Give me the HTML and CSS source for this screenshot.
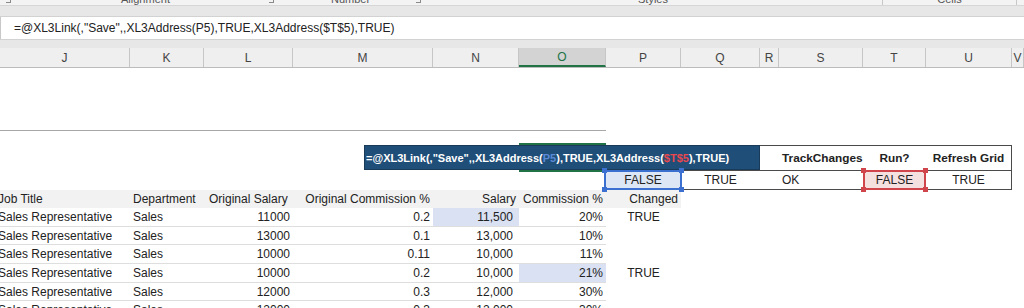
FILE: index.html
```html
<!DOCTYPE html>
<html lang="en">
  <head>
    <meta charset="UTF-8" />
    <title>XL3Link - Save</title>
    <link rel="stylesheet" href="styles.css">
  </head>
  <body>
    <div class="ribbon">
      <div class="group g-font"><span class="launch"></span></div>
      <div class="group g-align"><span class="label">Alignment</span><span class="launch"></span></div>
      <div class="group g-number"><span class="label">Number</span><span class="launch"></span></div>
      <div class="group g-styles"><span class="label">Styles</span></div>
      <div class="group g-cells"><span class="label">Cells</span></div>
    </div>
    <div class="band"></div>
    <div class="formula-bar">=@XL3Link(,"Save",,XL3Address(P5),TRUE,XL3Address($T$5),TRUE)</div>
    <div class="band band-low"></div>

    <div class="col-heads">
      <div class="ch w-j">J</div>
      <div class="ch w-k">K</div>
      <div class="ch w-l">L</div>
      <div class="ch w-m">M</div>
      <div class="ch w-n">N</div>
      <div class="ch w-o active">O</div>
      <div class="ch w-p">P</div>
      <div class="ch w-q">Q</div>
      <div class="ch w-r">R</div>
      <div class="ch w-s">S</div>
      <div class="ch w-t">T</div>
      <div class="ch w-u">U</div>
      <div class="ch w-v">V</div>
    </div>

    <div class="sheet">
      <div class="row r-blank">
        <div class="rule"></div>
      </div>
      <div class="row r-gap"></div>

      <div class="row r-box">
        <div class="c-o active-cell"></div>
        <div class="xl-box">=@XL3Link(,"Save",,XL3Address(<span class="ref-p">P5</span>),TRUE,XL3Address(<span class="ref-t">$T$5</span>),TRUE)</div>
        <div class="c-r tb"></div>
        <div class="c-s tb bold left">TrackChanges</div>
        <div class="c-t tb bold center">Run?</div>
        <div class="c-u tb tb-end bold center">Refresh Grid</div>
      </div>

      <div class="row r-vals">
        <div class="c-p sel sel-blue center">FALSE<i class="h tl"></i><i class="h tr"></i><i class="h bl"></i><i class="h br"></i></div>
        <div class="c-q tb2 center">TRUE</div>
        <div class="c-r tb2"></div>
        <div class="c-s tb2 left">OK</div>
        <div class="c-t sel sel-red center">FALSE<i class="h tl"></i><i class="h tr"></i><i class="h bl"></i><i class="h br"></i></div>
        <div class="c-u tb2 tb-end center">TRUE</div>
      </div>

      <div class="row r-head">
        <div class="c-j left">Job Title</div>
        <div class="c-k left">Department</div>
        <div class="c-l left pad-l">Original Salary</div>
        <div class="c-m right">Original Commission %</div>
        <div class="c-n right">Salary</div>
        <div class="c-o right">Commission %</div>
        <div class="c-p right">Changed</div>
      </div>

      <div class="row r-data">
        <div class="c-j left">Sales Representative</div>
        <div class="c-k left">Sales</div>
        <div class="c-l right">11000</div>
        <div class="c-m right">0.2</div>
        <div class="c-n right acct hl">11,500</div>
        <div class="c-o right">20%</div>
        <div class="c-p center">TRUE</div>
      </div>
      <div class="row r-data">
        <div class="c-j left">Sales Representative</div>
        <div class="c-k left">Sales</div>
        <div class="c-l right">13000</div>
        <div class="c-m right">0.1</div>
        <div class="c-n right acct">13,000</div>
        <div class="c-o right">10%</div>
      </div>
      <div class="row r-data">
        <div class="c-j left">Sales Representative</div>
        <div class="c-k left">Sales</div>
        <div class="c-l right">10000</div>
        <div class="c-m right">0.11</div>
        <div class="c-n right acct">10,000</div>
        <div class="c-o right">11%</div>
      </div>
      <div class="row r-data">
        <div class="c-j left">Sales Representative</div>
        <div class="c-k left">Sales</div>
        <div class="c-l right">10000</div>
        <div class="c-m right">0.2</div>
        <div class="c-n right acct">10,000</div>
        <div class="c-o right hl">21%</div>
        <div class="c-p center">TRUE</div>
      </div>
      <div class="row r-data">
        <div class="c-j left">Sales Representative</div>
        <div class="c-k left">Sales</div>
        <div class="c-l right">12000</div>
        <div class="c-m right">0.3</div>
        <div class="c-n right acct">12,000</div>
        <div class="c-o right">30%</div>
      </div>
      <div class="row r-data">
        <div class="c-j left">Sales Representative</div>
        <div class="c-k left">Sales</div>
        <div class="c-l right">12000</div>
        <div class="c-m right">0.3</div>
        <div class="c-n right acct">12,000</div>
        <div class="c-o right">30%</div>
      </div>
    </div>
  </body>
</html>
```

FILE: styles.css
```css
body {
  margin: 0;
  width: 1024px;
  height: 308px;
  overflow: hidden;
  background: #fff;
  color: #222;
  font-family: 'Liberation Sans', Arial, sans-serif;
}

/* ribbon group labels, cut off at the top edge */
.ribbon {
  display: flex;
  height: 5px;
  overflow: hidden;
  background: #f3f3f3;
  border-bottom: 1px solid #d6d6d6;
}
.group {
  position: relative;
  display: flex;
  justify-content: center;
  flex: none;
}
.group .label {
  font-size: 11px;
  line-height: 11px;
  margin-top: -6px;
  color: #555;
}
.g-font { width: 14px; }
.g-align { width: 263px; }
.g-number { width: 147px; }
.g-styles { width: 458px; border-right: 1px solid #c8c8c8; }
.g-cells { width: 133px; border-right: 1px solid #c8c8c8; }
.launch {
  position: absolute;
  right: 3px;
  top: -3px;
  width: 4px;
  height: 5px;
  border-right: 1px solid #8a8a8a;
  border-bottom: 1px solid #8a8a8a;
}

.band {
  height: 10px;
  background: #e7e7e7;
  border-bottom: 1px solid #d2d2d2;
}
.band-low {
  height: 8px;
  border-top: 1px solid #d2d2d2;
  border-bottom: none;
}
.formula-bar {
  height: 22px;
  line-height: 22px;
  padding-left: 13px;
  background: #fff;
  border-left: 1px solid #c8c8c8;
  font-size: 12px;
  color: #222;
  white-space: nowrap;
}

/* column letters */
.col-heads {
  display: flex;
  height: 20px;
  background: #efefef;
  border-bottom: 1px solid #bcbcbc;
  box-sizing: border-box;
}
.ch {
  flex: none;
  box-sizing: border-box;
  border-right: 1px solid #c6c6c6;
  text-align: center;
  font-size: 12px;
  line-height: 20px;
  color: #444;
}
.ch.active {
  background: #d3d3d3;
  color: #217346;
  border-bottom: 2px solid #217346;
  line-height: 18px;
}
.w-j { width: 130px; }
.w-k { width: 74px; }
.w-l { width: 89px; }
.w-m { width: 140px; }
.w-n { width: 86px; }
.w-o { width: 87px; }
.w-p { width: 75px; }
.w-q { width: 79px; }
.w-r { width: 19px; }
.w-s { width: 84px; }
.w-t { width: 63px; }
.w-u { width: 86px; }
.w-v { width: 12px; }

/* cell grid */
.row {
  display: grid;
  grid-template-columns: 130px 74px 89px 140px 86px 87px 75px 79px 19px 84px 63px 86px 12px;
  font-size: 12px;
}
.row > * {
  grid-row: 1;
  box-sizing: border-box;
  white-space: nowrap;
  display: flex;
  align-items: center;
}
.c-j { grid-column: 1; }
.c-k { grid-column: 2; }
.c-l { grid-column: 3; }
.c-m { grid-column: 4; }
.c-n { grid-column: 5; }
.c-o { grid-column: 6; }
.c-p { grid-column: 7; }
.c-q { grid-column: 8; }
.c-r { grid-column: 9; }
.c-s { grid-column: 10; }
.c-t { grid-column: 11; }
.c-u { grid-column: 12; }

.left { justify-content: flex-start; padding-left: 3px; }
.right { justify-content: flex-end; padding-right: 3px; }
.center { justify-content: center; }
.bold { font-weight: bold; font-size: 11.8px; }
.c-j.left { padding-left: 0; margin-left: -2px; }
.pad-l { padding-left: 5px; }
.acct { padding-right: 6px; }

.r-blank { height: 63px; }
.rule {
  grid-column: 1 / 7;
  border-bottom: 1px solid #a8a8a8;
}
.r-gap { height: 14px; }

.r-box { height: 25px; }
.active-cell {
  box-shadow: 0 -2px 0 #217346, 0 2px 0 #217346;
}
.xl-box {
  grid-column: 4 / 9;
  margin-left: 71px;
  background: #1f4e78;
  border: 1px solid #1a3a5a;
  color: #fff;
  font-weight: bold;
  font-size: 11px;
  padding-left: 1px;
  overflow: hidden;
}
.ref-p { color: #5a8ad6; }
.ref-t { color: #e8484e; }

.tb { border-top: 1px solid #4a4a4a; }
.tb-end { border-right: 1px solid #4a4a4a; }

.r-vals { height: 20px; }
.tb2 {
  border-top: 1px solid #4a4a4a;
  border-bottom: 1px solid #4a4a4a;
}
.sel {
  position: relative;
  border: 2px solid;
}
.sel-blue {
  border-color: #3b6fd0;
  background: #dde6f4;
  margin-left: -2px;
  margin-right: -1px;
}
.sel-red {
  border-color: #d0454c;
  background: #f5e0e0;
}
.h {
  position: absolute;
  width: 5px;
  height: 5px;
}
.sel-blue .h { background: #3b6fd0; }
.sel-red .h { background: #d0454c; }
.h.tl { left: -4px; top: -4px; }
.h.tr { right: -4px; top: -4px; }
.h.bl { left: -4px; bottom: -4px; }
.h.br { right: -4px; bottom: -4px; }

.r-head { height: 18px; }
.r-head > * {
  background: #f2f2f2;
}

.r-data { height: 18.7px; }
.r-data > *:not(.c-p) {
  border-bottom: 1px solid #dedede;
}
.hl { background: #d9e1f2; }
```
